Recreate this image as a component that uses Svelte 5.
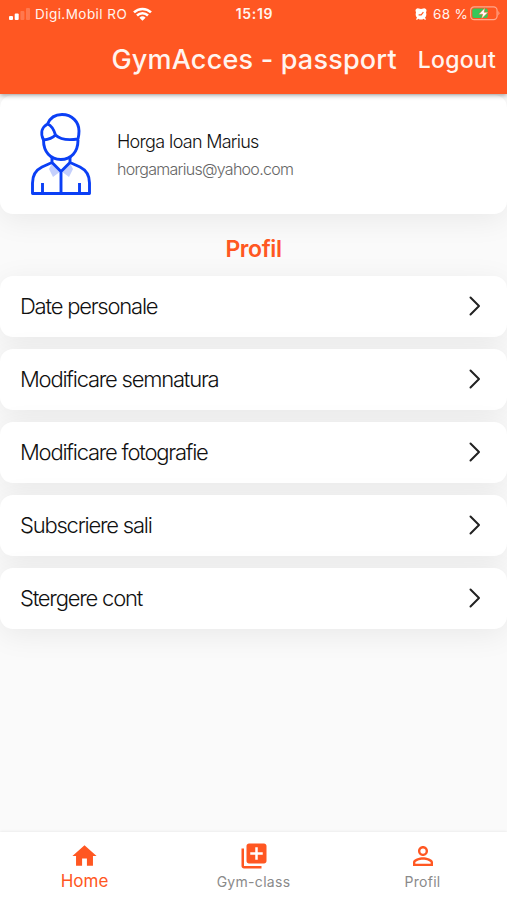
<script lang="ts">
  const items = [
    'Date personale',
    'Modificare semnatura',
    'Modificare fotografie',
    'Subscriere sali',
    'Stergere cont',
  ];
</script>

<div class="screen">
  <header>
    <div class="status">
      <div class="carrier">
        <svg class="signal" width="22" height="12" viewBox="0 0 22 12" fill="#fff">
          <rect x="0" y="8" width="4" height="4" rx="1" />
          <rect x="5.7" y="5.5" width="4" height="6.5" rx="1" />
          <rect x="11.4" y="3" width="4" height="9" rx="1" opacity=".2" />
          <rect x="17" y="0" width="4" height="12" rx="1" opacity=".2" />
        </svg>
        <span class="operator">Digi.Mobil RO</span>
        <svg class="wifi" width="19" height="14" viewBox="0 0 19 14" fill="none" stroke="#fff" stroke-width="2.5">
          <path d="M1 5.4a12.2 12.2 0 0 1 17 0" />
          <path d="M4 8.5a7.8 7.8 0 0 1 11 0" />
          <path d="M9.5 13.8 6.4 10.7a4.5 4.5 0 0 1 6.2 0z" fill="#fff" stroke="none" />
        </svg>
      </div>
      <span class="time">15:19</span>
      <div class="power">
        <svg class="alarm" width="12" height="12" viewBox="0 0 12 12">
          <path d="M.5 2.7A2.2 2.2 0 0 1 3.8.6L6 1.1 8.2.6a2.2 2.2 0 0 1 3.3 2.1L11 4.5a5.2 5.2 0 0 1-1 5.2l1 1.5-1 .7-1.2-1.2a5.4 5.4 0 0 1-5.6 0L2 11.9l-1-.7 1-1.5a5.2 5.2 0 0 1-1-5.2z" fill="#fff" />
          <path d="M8.4 4.2 6.2 6.8H3.6" fill="none" stroke="#ff5722" stroke-width="1.2" />
        </svg>
        <span class="percent">68 %</span>
        <svg width="30" height="15" viewBox="0 0 30 15">
          <rect x=".6" y=".9" width="26.5" height="12.8" rx="3.6" fill="none" stroke="#ffa88d" stroke-width="1.2" />
          <rect x="2.3" y="2.6" width="15.500" height="9.4" rx="2" fill="#35c759" />
          <path d="M28.400 5.1q2 2.2 0 4.4z" fill="#ffa88d" />
          <path d="M15 1.800 8.700 8.200h4L11.400 13l6.700-6.700h-4z" fill="#fff" stroke="#ff5722" stroke-width=".5" />
        </svg>
      </div>
    </div>
    <div class="toolbar">
      <h1>GymAcces - passport</h1>
      <span class="logout">Logout</span>
    </div>
  </header>

  <main>
    <section class="card user">
      <svg width="60" height="82" viewBox="0 0 60 82" fill="none" stroke="#0b3ff5" stroke-width="2.9" stroke-linejoin="round">
        <path d="m21 50-3 6 4 8 8-6zM39 50l3 6-4 8-8-6z" fill="#c4cffc" stroke="none" />
        <path d="M12.500 27c0 12 7 19.500 17.300 19.500S47 39 47 27M12.500 27C9 20 11 14 16.500 11 19 5 24 1.500 31 1.500 41 1.500 48 9 48 18c0 4-.5 6-1 8-10 1.500-18 .5-22.500-4-3 3-7 4.500-12 5M16.500 11c4 1.500 6.500 6 8 11" />
        <path d="M21 44v5.500l9 9 9-9V44M21 49.500 11 54C5 57 1.500 63 1.500 70v10.500h57V70c0-7-3.500-13-9.500-16l-10-4.500M30 58.500v22M11.500 70v10.500M48.500 70v10.500" />
      </svg>
      <div class="info">
        <span class="name">Horga Ioan Marius</span>
        <span class="email">horgamarius@yahoo.com</span>
      </div>
    </section>

    <h2>Profil</h2>

    <div class="menu">
      {#each items as item}
        <div class="card item">
          <span>{item}</span>
          <svg width="12" height="20" viewBox="0 0 12 20" fill="none" stroke="#222" stroke-width="2" stroke-linecap="round" stroke-linejoin="round">
            <path d="m1.500 1.500 8.500 8.500-8.500 8.500" />
          </svg>
        </div>
      {/each}
    </div>
  </main>

  <nav>
    <div class="tab active">
      <svg width="29" height="29" viewBox="0 0 24 24"><path d="M10 20v-6h4v6h5v-8h3L12 3 2 12h3v8z" /></svg>
      <span>Home</span>
    </div>
    <div class="tab">
      <svg width="30" height="30" viewBox="0 0 24 24"><path d="M4 6H2v14c0 1.100.9 2 2 2h14v-2H4V6zm16-4H8c-1.100 0-2 .9-2 2v12c0 1.100.9 2 2 2h12c1.100 0 2-.9 2-2V4c0-1.100-.9-2-2-2zm-1 9h-4v4h-2v-4H9V9h4V5h2v4h4v2z" /></svg>
      <span>Gym-class</span>
    </div>
    <div class="tab">
      <svg width="30" height="30" viewBox="0 0 24 24"><path d="M12 5.900a2.100 2.100 0 1 1 0 4.200 2.100 2.100 0 0 1 0-4.200m0 9c2.970 0 6.100 1.460 6.100 2.100v1.100H5.900V17c0-.64 3.130-2.100 6.100-2.100M12 4C9.790 4 8 5.790 8 8s1.790 4 4 4 4-1.790 4-4-1.790-4-4-4zm0 9c-2.670 0-8 1.340-8 4v3h16v-3c0-2.660-5.330-4-8-4z" /></svg>
      <span>Profil</span>
    </div>
  </nav>
</div>

<style>
  :global(body) { margin: 0; }
  .screen {
    display: flex;
    flex-direction: column;
    height: 900px;
    overflow: hidden;
    background: #fafafa;
    font-family: Inter, "Liberation Sans", sans-serif;
  }
  svg { display: block; flex: none; }
  h1, h2 { margin: 0; }
  span, h1, h2 { white-space: nowrap; }

  header {
    position: relative;
    z-index: 1;
    height: 94px;
    flex: none;
    background: #ff5722;
    color: #fff4ef;
    box-shadow: 0 1px 5px rgba(0, 0, 0, .4);
  }
  .status {
    display: grid;
    grid-template-columns: 1fr auto 1fr;
    align-items: center;
    height: 27px;
    padding: 0 7px 0 9px;
    font-size: 13.5px;
  }
  .carrier, .power { display: flex; align-items: center; }
  .power { justify-content: flex-end; }
  .operator { margin: 0 6px 0 4px; letter-spacing: .45px; }
  .signal { margin-top: 1px; }
  .time { font-size: 14px; font-weight: 600; letter-spacing: .7px; }
  .percent { margin: 0 2px 0 6px; letter-spacing: .3px; }
  .toolbar {
    display: flex;
    align-items: center;
    justify-content: flex-end;
    height: 65px;
    padding-right: 11px;
  }
  h1 { font-size: 27px; font-weight: 500; letter-spacing: .2px; margin-right: 21px; }
  .logout { font-size: 23px; font-weight: 500; letter-spacing: .25px; }

  main { flex: 1; padding-top: 1px; }
  .card {
    background: #fff;
    border-radius: 13px;
    box-shadow: 0 6px 30px rgba(0, 0, 0, .07);
  }
  .user {
    display: flex;
    height: 119px;
    box-sizing: border-box;
    padding: 18px 31px;
  }
  .info { display: flex; flex-direction: column; margin: 16px 0 0 26px; }
  .name { font-size: 18px; line-height: 26px; font-weight: 300; letter-spacing: -.72px; color: #111; }
  .email { font-size: 16px; line-height: 28px; font-weight: 300; letter-spacing: -.72px; color: #666; }
  h2 {
    height: 62px;
    line-height: 70px;
    text-align: center;
    font-size: 23px;
    font-weight: 600;
    letter-spacing: -.4px;
    color: #ff5722;
  }
  .menu { display: flex; flex-direction: column; gap: 12px; }
  .item {
    display: flex;
    align-items: center;
    justify-content: space-between;
    height: 61px;
    padding: 0 26px 0 20px;
    font-size: 22px;
    font-weight: 300;
    letter-spacing: -1.22px;
    color: #111;
  }
  .item span { padding-bottom: 2px; }
  .item svg { margin-bottom: 1px; }

  nav {
    display: grid;
    grid-template-columns: repeat(3, 1fr);
    height: 68px;
    background: #fff;
    box-shadow: 0 0 3px rgba(0, 0, 0, .1);
  }
  .tab { display: flex; flex-direction: column; align-items: center; padding-top: 9px; }
  .tab svg { height: 30px; fill: #ff5722; }
  .tab span { font-size: 14px; line-height: 21px; letter-spacing: .3px; color: #8a8a8a; }
  .tab.active span { font-size: 17px; line-height: 20px; letter-spacing: 0; color: #ff5722; }
</style>
